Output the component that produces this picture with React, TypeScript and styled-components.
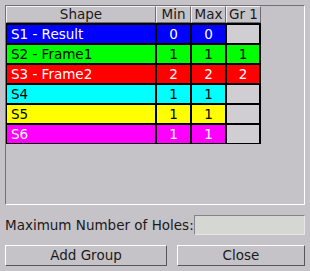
import React from "react";
import styled, { createGlobalStyle } from "styled-components";

const GlobalStyle = createGlobalStyle`
  html, body {
    margin: 0;
    padding: 0;
    background: #c5c3c7;
  }
  body {
    font-family: "DejaVu Sans", "Liberation Sans", sans-serif;
    font-size: 13.5px;
  }
`;

const Window = styled.div`
  width: 310px;
  height: 271px;
  box-sizing: border-box;
  padding: 5px 5px 0 5px;
  display: flex;
  flex-direction: column;
  background: #c5c3c7;
  color: #111;
`;

const Frame = styled.div`
  height: 200px;
  box-sizing: border-box;
  border: 1px solid;
  border-color: #727074 #ffffff #ffffff #727074;
  display: flex;
  flex-direction: column;
  align-items: flex-start;
`;

const HeaderRow = styled.div`
  display: grid;
  grid-template-columns: 150px 35px 35px 35px;
  height: 17px;
`;

const HeaderCell = styled.div`
  box-sizing: border-box;
  border: 1px solid;
  border-color: #f2f2f2 #6e6c70 #6e6c70 #f2f2f2;
  display: flex;
  align-items: center;
  justify-content: center;
  line-height: 15px;
  color: #1a1a1a;
  white-space: nowrap;
`;

const Grid = styled.div`
  display: grid;
  grid-template-columns: 148px 33px 33px 32px;
  grid-auto-rows: 18px;
  gap: 2px;
  padding: 2px 2px 1px 1px;
  background: #000;
`;

const Cell = styled.div<{ $bg: string; $fg: string; $center?: boolean }>`
  background: ${({ $bg }) => $bg};
  color: ${({ $fg }) => $fg};
  display: flex;
  align-items: center;
  justify-content: ${({ $center }) => ($center ? "center" : "flex-start")};
  padding-left: ${({ $center }) => ($center ? "0" : "4px")};
  white-space: nowrap;
  line-height: 18px;
`;

const EmptyCell = styled.div`
  background: #d0ced2;
`;

const HolesRow = styled.div`
  margin-top: 10px;
  height: 20px;
  display: flex;
  align-items: center;
`;

const Label = styled.span`
  flex: 1;
  color: #1a1a1a;
  white-space: nowrap;
`;

const Field = styled.input`
  width: 111px;
  height: 20px;
  box-sizing: border-box;
  margin: 0;
  padding: 0 3px;
  background: #d5d7d3;
  border: 1px solid;
  border-color: #858387 #e6e6e6 #e6e6e6 #858387;
  outline: none;
  font: inherit;
`;

const ButtonRow = styled.div`
  margin-top: 10px;
  display: flex;
  gap: 10px;
`;

const Button = styled.button<{ $w: number }>`
  width: ${({ $w }) => $w}px;
  height: 21px;
  box-sizing: border-box;
  margin: 0;
  padding: 0;
  background: #c5c3c7;
  border: 1px solid;
  border-color: #ffffff #58565a #58565a #ffffff;
  font: inherit;
  color: #1a1a1a;
  line-height: 19px;
`;

type Shape = {
  name: string;
  bg: string;
  fg: string;
  min: number;
  max: number;
  gr1?: number;
};

const shapes: Shape[] = [
  { name: "S1 - Result", bg: "#0000ff", fg: "#ffffff", min: 0, max: 0 },
  { name: "S2 - Frame1", bg: "#00ff00", fg: "#000000", min: 1, max: 1, gr1: 1 },
  { name: "S3 - Frame2", bg: "#ff0000", fg: "#ffffff", min: 2, max: 2, gr1: 2 },
  { name: "S4", bg: "#00ffff", fg: "#000000", min: 1, max: 1 },
  { name: "S5", bg: "#ffff00", fg: "#000000", min: 1, max: 1 },
  { name: "S6", bg: "#ff00ff", fg: "#ffffff", min: 1, max: 1 },
];

export default function App() {
  return (
    <>
      <GlobalStyle />
      <Window>
        <Frame>
          <HeaderRow>
            <HeaderCell>Shape</HeaderCell>
            <HeaderCell>Min</HeaderCell>
            <HeaderCell>Max</HeaderCell>
            <HeaderCell>Gr 1</HeaderCell>
          </HeaderRow>
          <Grid>
            {shapes.map((s) => (
              <React.Fragment key={s.name}>
                <Cell $bg={s.bg} $fg={s.fg}>{s.name}</Cell>
                <Cell $bg={s.bg} $fg={s.fg} $center>{s.min}</Cell>
                <Cell $bg={s.bg} $fg={s.fg} $center>{s.max}</Cell>
                {s.gr1 !== undefined ? (
                  <Cell $bg={s.bg} $fg={s.fg} $center>{s.gr1}</Cell>
                ) : (
                  <EmptyCell />
                )}
              </React.Fragment>
            ))}
          </Grid>
        </Frame>
        <HolesRow>
          <Label>Maximum Number of Holes:</Label>
          <Field />
        </HolesRow>
        <ButtonRow>
          <Button $w={162}>Add Group</Button>
          <Button $w={128}>Close</Button>
        </ButtonRow>
      </Window>
    </>
  );
}
